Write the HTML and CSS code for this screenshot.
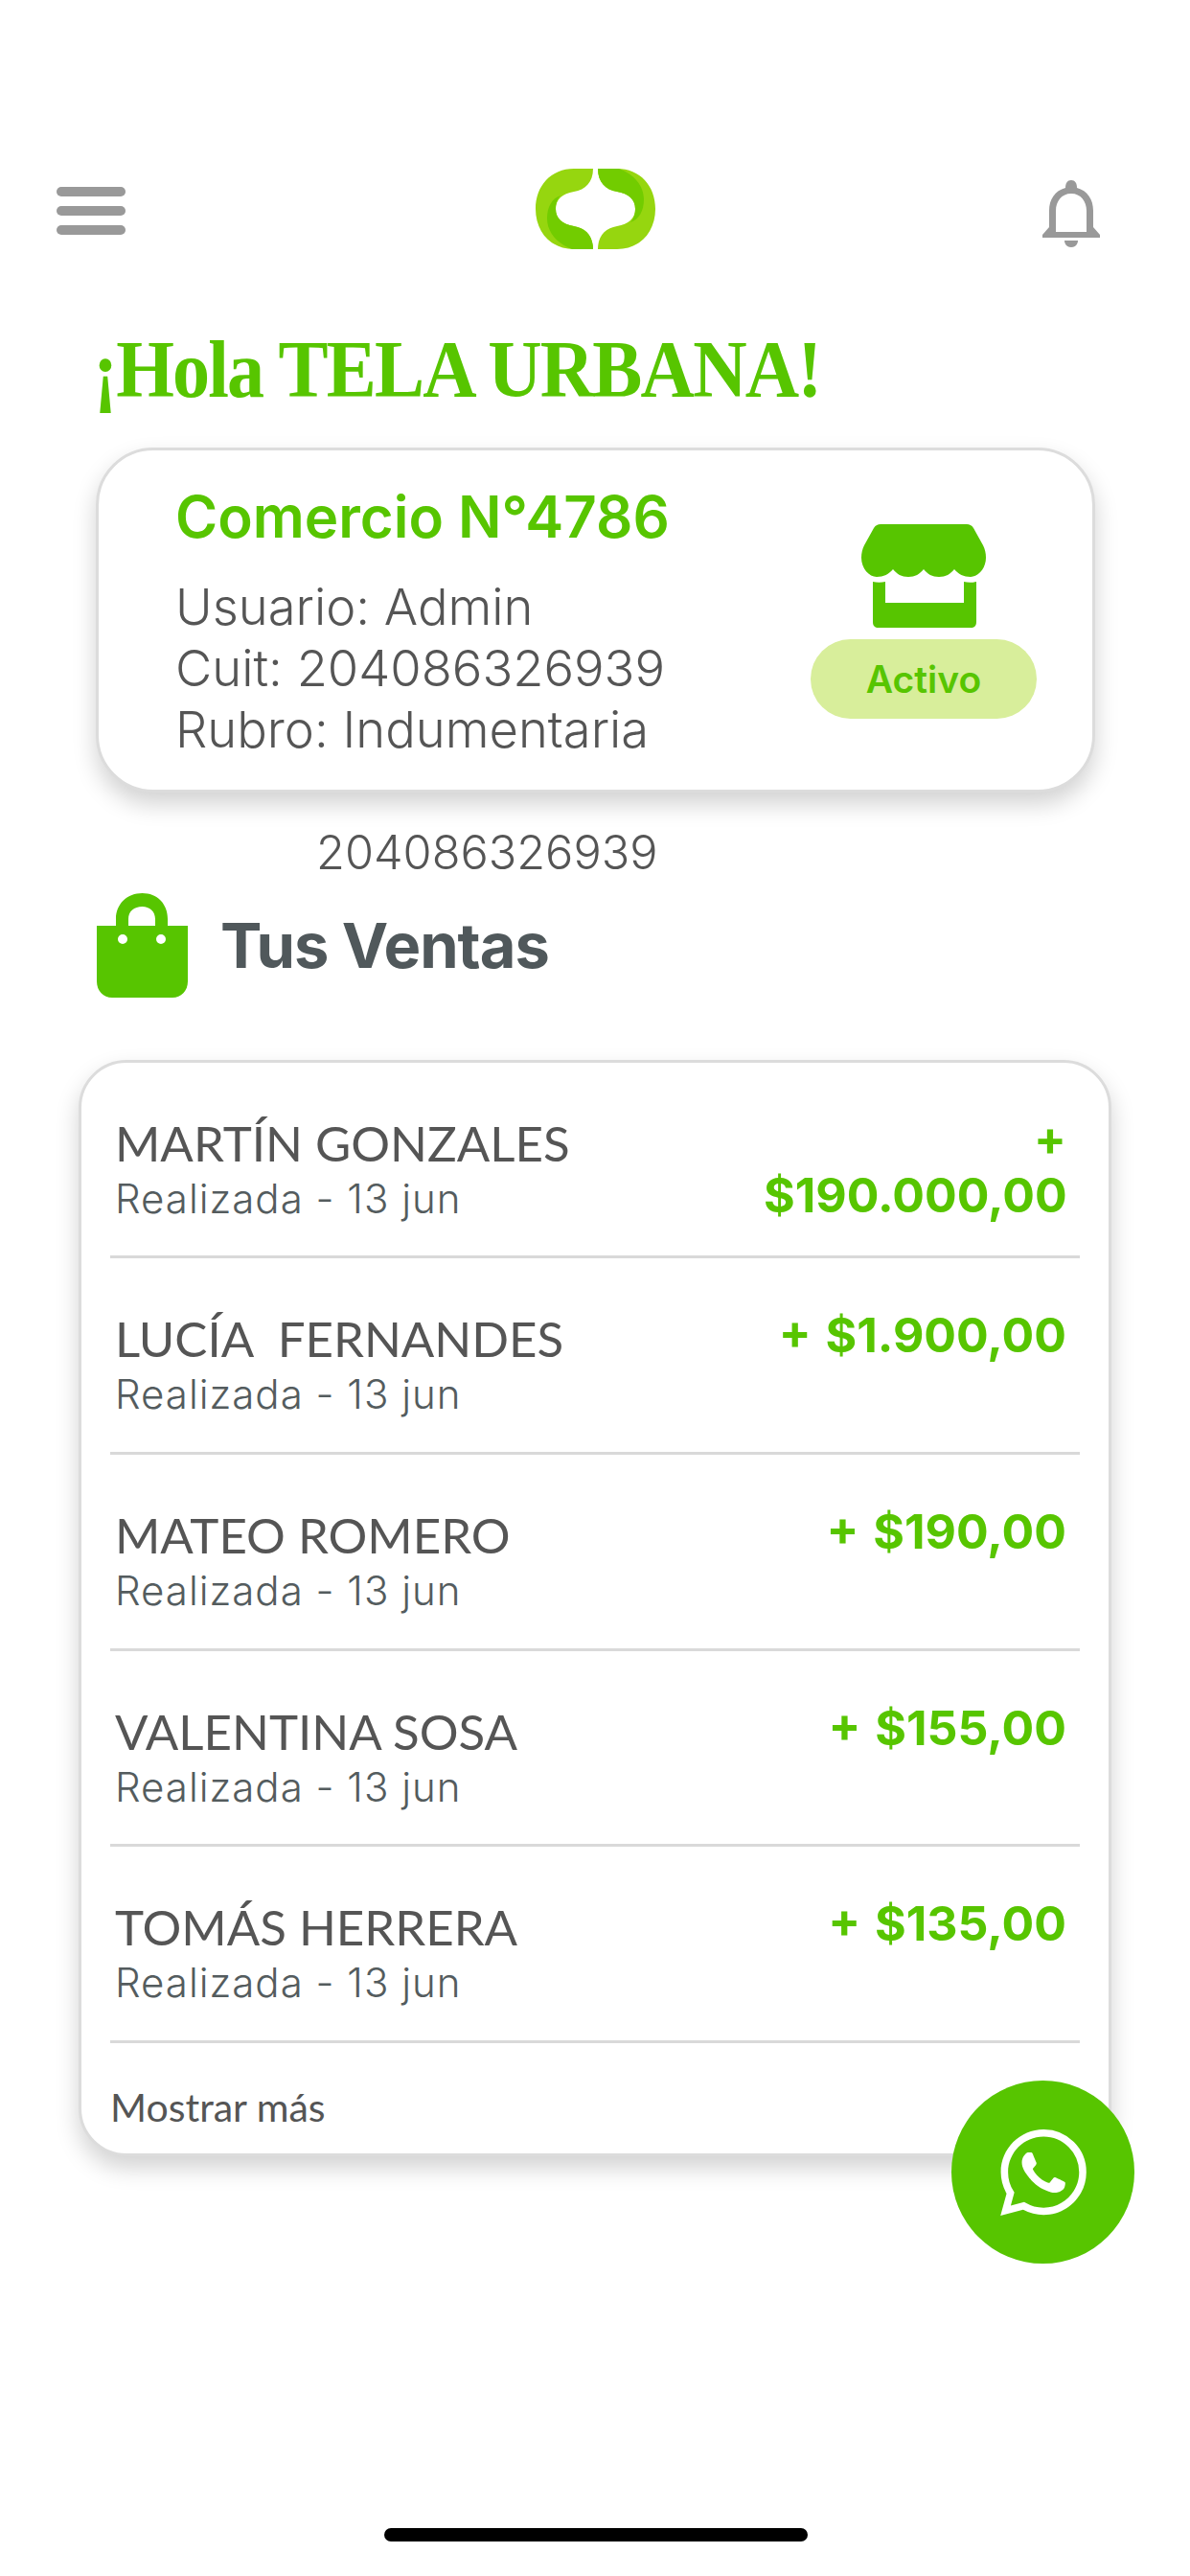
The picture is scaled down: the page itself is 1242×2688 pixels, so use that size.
FILE: index.html
```html
<!DOCTYPE html>
<html lang="es">
<head>
<meta charset="utf-8">
<title>Tela Urbana</title>
<link rel="stylesheet" href="styles.css">
</head>
<body>
<main class="screen">
  <header class="topbar">
    <div class="menu"><span></span><span></span><span></span></div>
    <svg class="logo" viewBox="0 0 125 84">
      <g>
        <path fill="#96d60f" d="M60 0H40C16 0 0 18 0 42C0 66 16 84 40 84H60C60 70 52 62 40 60C28 58 21 52 21 42C21 32 28 26 40 24C52 22 60 14 60 0Z"/>
        <path fill="#72cc00" d="M60 84H38C22 78 12 66 12 52C12 40 17 31 26 28C23 31 21 36 21 42C21 52 28 58 40 60C52 62 60 70 60 84Z"/>
      </g>
      <g transform="rotate(180 62.5 42)">
        <path fill="#96d60f" d="M60 0H40C16 0 0 18 0 42C0 66 16 84 40 84H60C60 70 52 62 40 60C28 58 21 52 21 42C21 32 28 26 40 24C52 22 60 14 60 0Z"/>
        <path fill="#72cc00" d="M60 84H38C22 78 12 66 12 52C12 40 17 31 26 28C23 31 21 36 21 42C21 52 28 58 40 60C52 62 60 70 60 84Z"/>
      </g>
    </svg>
    <svg class="bell" viewBox="0 0 60 70">
      <path fill="#999" fill-rule="evenodd" d="M24 8C24 3 26 0 30 0C34 0 36 3 36 8C47 11 53 20 53 32V49L60 57V60H0V57L7 49V32C7 20 13 11 24 8ZM30 14C20 14 14 22 14 32V54H46V32C46 22 40 14 30 14Z"/>
      <path fill="#999" d="M23 63H37C37 67 34 70 30 70C26 70 23 67 23 63Z"/>
    </svg>
  </header>

  <h1 class="greeting">¡Hola TELA URBANA!</h1>

  <section class="merchant">
    <div class="merchant-info">
      <h2 class="merchant-title">Comercio N°4786</h2>
      <p class="merchant-line">Usuario: Admin</p>
      <p class="merchant-line">Cuit: 204086326939</p>
      <p class="merchant-line">Rubro: Indumentaria</p>
    </div>
    <div class="merchant-status">
      <svg class="store" viewBox="0 0 130 108">
        <path fill="#57c500" d="M20 0H110C113 0 115 1 117 4L127 22C129 26 130 30 130 35C130 46 122 55 114 55C107 55 101 52 97 47C93 52 88 55 81 55C74 55 69 52 65 47C61 52 56 55 49 55C42 55 37 52 33 47C29 52 23 55 16 55C8 55 0 46 0 35C0 30 1 26 3 22L13 4C15 1 17 0 20 0Z"/>
        <path fill="#57c500" d="M12 60C16 61 21 61 25 60V82H107V60C111 61 116 61 120 60V102C120 106 118 108 114 108H18C14 108 12 106 12 102Z"/>
      </svg>
      <span class="badge">Activo</span>
    </div>
  </section>

  <p class="cuit">204086326939</p>

  <div class="section-head">
    <svg class="bag" viewBox="0 0 95 109">
      <path fill="#57c500" fill-rule="evenodd" d="M20 34V27C20 11 32 0 47.500 0C63 0 74 11 74 27V34H95V92C95 102 88 109 79 109H16C7 109 0 102 0 92V34ZM33 34H61V27C61 19 55 14 47.500 14C39 14 33 19 33 27ZM27 43A5 5 0 1 0 27 53A5 5 0 1 0 27 43ZM67 43A5 5 0 1 0 67 53A5 5 0 1 0 67 43Z"/>
    </svg>
    <h2 class="section-title">Tus Ventas</h2>
  </div>

  <section class="sales">
    <article class="sale">
      <div class="sale-who"><div class="sale-name">MARTÍN GONZALES</div><div class="sale-meta">Realizada - 13 jun</div></div>
      <div class="sale-amount sale-amount-wrap">+ $190.000,00</div>
    </article>
    <article class="sale">
      <div class="sale-who"><div class="sale-name">LUCÍA&nbsp; FERNANDES</div><div class="sale-meta">Realizada - 13 jun</div></div>
      <div class="sale-amount">+ $1.900,00</div>
    </article>
    <article class="sale">
      <div class="sale-who"><div class="sale-name">MATEO ROMERO</div><div class="sale-meta">Realizada - 13 jun</div></div>
      <div class="sale-amount">+ $190,00</div>
    </article>
    <article class="sale">
      <div class="sale-who"><div class="sale-name">VALENTINA SOSA</div><div class="sale-meta">Realizada - 13 jun</div></div>
      <div class="sale-amount">+ $155,00</div>
    </article>
    <article class="sale">
      <div class="sale-who"><div class="sale-name">TOMÁS HERRERA</div><div class="sale-meta">Realizada - 13 jun</div></div>
      <div class="sale-amount">+ $135,00</div>
    </article>
    <div class="more">Mostrar más</div>
  </section>

  <a class="whatsapp">
    <svg viewBox="0 0 24 24"><path fill="#fff" d="M17.472 14.382c-.297-.149-1.758-.867-2.03-.967-.273-.099-.471-.148-.67.15-.197.297-.767.966-.94 1.164-.173.199-.347.223-.644.075-.297-.15-1.255-.463-2.39-1.475-.883-.788-1.48-1.761-1.653-2.059-.173-.297-.018-.458.13-.606.134-.133.298-.347.446-.52.149-.174.198-.298.298-.497.099-.198.05-.371-.025-.52-.075-.149-.669-1.612-.916-2.207-.242-.579-.487-.5-.669-.51-.173-.008-.371-.01-.57-.01-.198 0-.52.074-.792.372-.272.297-1.04 1.016-1.04 2.479 0 1.462 1.065 2.875 1.213 3.074.149.198 2.096 3.2 5.077 4.487.709.306 1.262.489 1.694.625.712.227 1.36.195 1.871.118.571-.085 1.758-.719 2.006-1.413.248-.694.248-1.289.173-1.413-.074-.124-.272-.198-.57-.347m-5.421 7.403h-.004a9.87 9.87 0 01-5.031-1.378l-.361-.214-3.741.982.998-3.648-.235-.374a9.86 9.86 0 01-1.51-5.26c.001-5.45 4.436-9.884 9.888-9.884 2.64 0 5.122 1.03 6.988 2.898a9.825 9.825 0 012.893 6.994c-.003 5.45-4.437 9.884-9.885 9.884m8.413-18.297A11.815 11.815 0 0012.05 0C5.495 0 .16 5.335.157 11.892c0 2.096.547 4.142 1.588 5.945L.057 24l6.305-1.654a11.882 11.882 0 005.683 1.448h.005c6.554 0 11.89-5.335 11.893-11.893a11.821 11.821 0 00-3.48-8.413z"/></svg>
  </a>

  <div class="home-indicator"></div>
</main>
</body>
</html>
```
FILE: styles.css
```css
* { box-sizing: border-box; }
html, body { margin: 0; padding: 0; background: #fff; }
.screen {
  position: relative;
  width: 1242px;
  height: 2688px;
  overflow: hidden;
  display: flex;
  flex-direction: column;
  font-family: Inter, "Liberation Sans", sans-serif;
  color: #555;
  background: #fff;
}
.topbar {
  height: 85px;
  margin-top: 176px;
  padding: 0 94px;
  display: grid;
  grid-template-columns: 1fr auto 1fr;
  align-items: start;
  flex: none;
}
.menu {
  width: 72px;
  margin: 19px 0 0 -35px;
  display: flex;
  flex-direction: column;
  gap: 10px;
}
.menu span {
  display: block;
  height: 10px;
  border-radius: 5px;
  background: #999;
}
.logo { width: 125px; height: 84px; display: block; }
.bell { width: 60px; height: 70px; margin-top: 12px; display: block; justify-self: end; }
.greeting {
  margin: 79px 0 0 97px;
  font-family: "Liberation Serif", serif;
  font-weight: 700;
  font-size: 84px;
  line-height: 92px;
  letter-spacing: -2px;
  transform: scaleX(.93);
  transform-origin: left center;
  color: #57c500;
  white-space: nowrap;
}
.merchant {
  margin: 35px 0 0 100px;
  width: 1043px;
  height: 360px;
  flex: none;
  border: 3px solid #dcdcdc;
  border-radius: 60px;
  background: #fff;
  box-shadow: 0 12px 24px rgba(0, 0, 0, .18);
  padding: 34px 58px 0 80px;
  display: flex;
  justify-content: space-between;
}
.merchant-title {
  margin: 0 0 27px;
  font-size: 60px;
  line-height: 70px;
  font-weight: 600;
  color: #57c500;
}
.merchant-line {
  margin: 0;
  font-size: 52.500px;
  line-height: 64px;
  font-weight: 300;
  white-space: nowrap;
}
.merchant-status {
  width: 236px;
  padding-top: 43px;
  display: flex;
  flex-direction: column;
  align-items: center;
  gap: 12px;
}
.store { width: 130px; height: 108px; display: block; flex: none; }
.badge {
  width: 236px;
  height: 83px;
  flex: none;
  border-radius: 42px;
  background: #d8ee9b;
  color: #57c500;
  font-weight: 600;
  font-size: 39px;
  display: flex;
  align-items: center;
  justify-content: center;
}
.cuit {
  margin: 34px 0 0 330px;
  font-size: 48.700px;
  line-height: 58px;
  font-weight: 300;
}
.section-head {
  margin: 13px 0 0 101px;
  display: flex;
  align-items: center;
  gap: 34px;
  height: 109px;
  flex: none;
}
.bag { width: 95px; height: 109px; display: block; }
.section-title {
  margin: 0;
  font-size: 65px;
  font-weight: 700;
  color: #50585b;
  letter-spacing: -1px;
}
.sales {
  margin: 65px 0 0 82px;
  width: 1078px;
  height: 1144px;
  flex: none;
  border: 3px solid #dcdcdc;
  border-radius: 50px;
  background: #fff;
  box-shadow: 0 12px 24px rgba(0, 0, 0, .18);
  padding: 0 30px;
}
.sale {
  height: 204.750px;
  border-bottom: 3px solid #d9d9d9;
  display: flex;
  justify-content: space-between;
  align-items: flex-start;
  padding: 55px 0 0 5px;
}
.sale:first-child { height: 204px; }
.sale-name {
  font-family: Lato, "Liberation Sans", sans-serif;
  font-size: 51px;
  line-height: 58px;
  white-space: nowrap;
}
.sale-meta {
  font-size: 42px;
  line-height: 58px;
  font-weight: 300;
  letter-spacing: 1px;
  color: #545c5e;
  white-space: nowrap;
}
.sale-amount {
  font-size: 50px;
  line-height: 56px;
  font-weight: 700;
  word-spacing: 3px;
  color: #57c500;
  text-align: right;
  padding-right: 14px;
  margin-top: -3px;
  white-space: nowrap;
}
.sale-amount-wrap {
  width: 330px;
  line-height: 59px;
  margin-top: -5px;
  white-space: normal;
}
.more {
  font-family: Lato, "Liberation Sans", sans-serif;
  font-size: 41px;
  line-height: 44px;
  margin-top: 45px;
}
.whatsapp {
  position: absolute;
  left: 993px;
  top: 2171px;
  width: 191px;
  height: 191px;
  border-radius: 50%;
  background: #57c500;
  display: flex;
  align-items: center;
  justify-content: center;
}
.whatsapp svg { width: 90px; height: 90px; display: block; }
.home-indicator {
  position: absolute;
  left: 401px;
  top: 2638px;
  width: 442px;
  height: 14px;
  border-radius: 7px;
  background: #000;
}
```
